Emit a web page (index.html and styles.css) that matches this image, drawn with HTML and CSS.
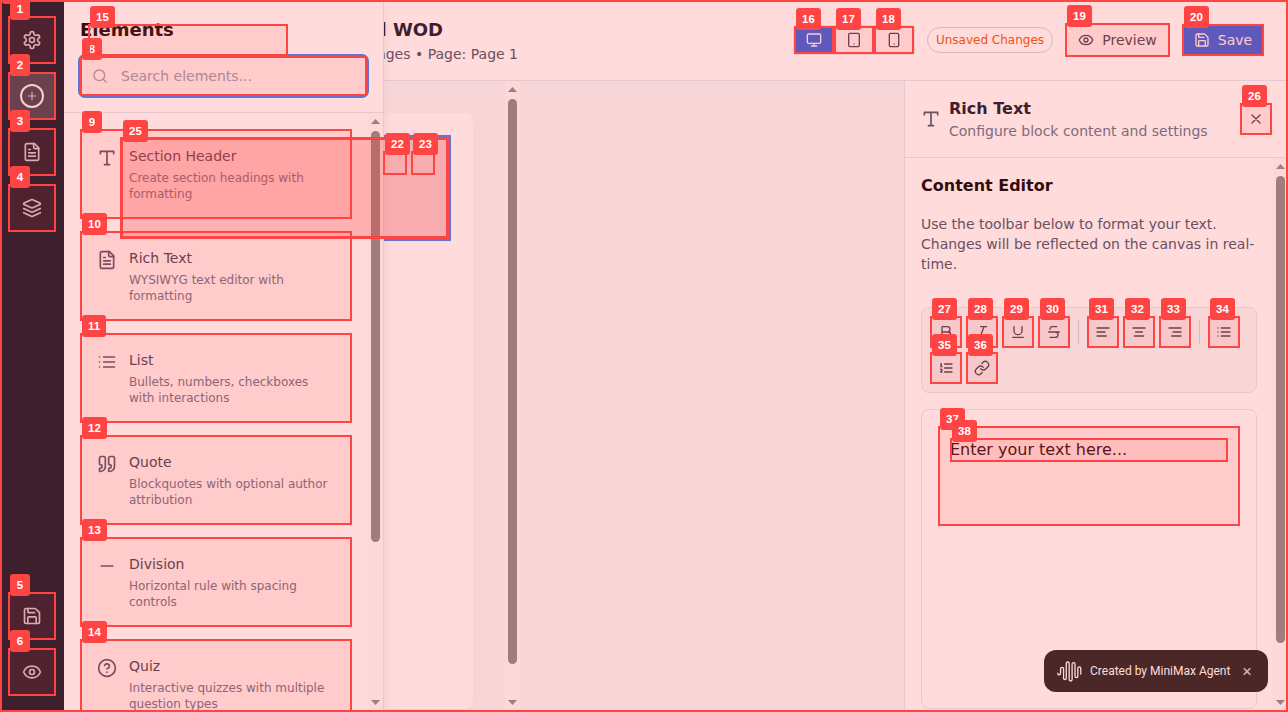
FILE: index.html
```html
<!DOCTYPE html>
<html lang="en">
<head>
<meta charset="utf-8">
<title>Page Builder</title>
<link rel="stylesheet" href="styles.css">
</head>
<body>
<svg class="defs" aria-hidden="true">
  <symbol id="settings" viewBox="0 0 24 24"><path d="M12.22 2h-.44a2 2 0 0 0-2 2v.18a2 2 0 0 1-1 1.73l-.43.25a2 2 0 0 1-2 0l-.15-.08a2 2 0 0 0-2.73.73l-.22.38a2 2 0 0 0 .73 2.73l.15.1a2 2 0 0 1 1 1.72v.51a2 2 0 0 1-1 1.74l-.15.09a2 2 0 0 0-.73 2.73l.22.38a2 2 0 0 0 2.73.73l.15-.08a2 2 0 0 1 2 0l.43.25a2 2 0 0 1 1 1.73V20a2 2 0 0 0 2 2h.44a2 2 0 0 0 2-2v-.18a2 2 0 0 1 1-1.73l.43-.25a2 2 0 0 1 2 0l.15.08a2 2 0 0 0 2.73-.73l.22-.39a2 2 0 0 0-.73-2.73l-.15-.08a2 2 0 0 1-1-1.74v-.5a2 2 0 0 1 1-1.74l.15-.09a2 2 0 0 0 .73-2.73l-.22-.38a2 2 0 0 0-2.73-.73l-.15.08a2 2 0 0 1-2 0l-.43-.25a2 2 0 0 1-1-1.73V4a2 2 0 0 0-2-2z"/><circle cx="12" cy="12" r="3"/></symbol>
  <symbol id="file" viewBox="0 0 24 24"><path d="M15 2H6a2 2 0 0 0-2 2v16a2 2 0 0 0 2 2h12a2 2 0 0 0 2-2V7Z"/><path d="M14 2v4a2 2 0 0 0 2 2h4M10 9H8M16 13H8M16 17H8"/></symbol>
  <symbol id="layers" viewBox="0 0 24 24"><path d="m12.83 2.18a2 2 0 0 0-1.66 0L2.6 6.08a1 1 0 0 0 0 1.83l8.58 3.91a2 2 0 0 0 1.66 0l8.58-3.9a1 1 0 0 0 0-1.83Z"/><path d="m22 17.65-9.17 4.16a2 2 0 0 1-1.66 0L2 17.65M22 12.65l-9.17 4.16a2 2 0 0 1-1.66 0L2 12.65"/></symbol>
  <symbol id="save" viewBox="0 0 24 24"><path d="M15.2 3a2 2 0 0 1 1.4.6l3.8 3.8a2 2 0 0 1 .6 1.4V19a2 2 0 0 1-2 2H5a2 2 0 0 1-2-2V5a2 2 0 0 1 2-2z"/><path d="M17 21v-7a1 1 0 0 0-1-1H8a1 1 0 0 0-1 1v7M7 3v4a1 1 0 0 0 1 1h7"/></symbol>
  <symbol id="eye" viewBox="0 0 24 24"><path d="M2.062 12.348a1 1 0 0 1 0-.696 10.75 10.75 0 0 1 19.876 0 1 1 0 0 1 0 .696 10.75 10.75 0 0 1-19.876 0"/><circle cx="12" cy="12" r="3"/></symbol>
  <symbol id="search" viewBox="0 0 24 24"><circle cx="11" cy="11" r="8"/><path d="m21 21-4.3-4.3"/></symbol>
  <symbol id="type" viewBox="0 0 24 24"><path d="M4 7V4h16v3M9 20h6M12 4v16"/></symbol>
  <symbol id="list" viewBox="0 0 24 24"><path d="M3 12h.01M3 18h.01M3 6h.01M8 12h13M8 18h13M8 6h13"/></symbol>
  <symbol id="quote" viewBox="0 0 24 24"><path d="M16 3a2 2 0 0 0-2 2v6a2 2 0 0 0 2 2 1 1 0 0 1 1 1v1a2 2 0 0 1-2 2 1 1 0 0 0-1 1v2a1 1 0 0 0 1 1 6 6 0 0 0 6-6V5a2 2 0 0 0-2-2zM5 3a2 2 0 0 0-2 2v6a2 2 0 0 0 2 2 1 1 0 0 1 1 1v1a2 2 0 0 1-2 2 1 1 0 0 0-1 1v2a1 1 0 0 0 1 1 6 6 0 0 0 6-6V5a2 2 0 0 0-2-2z"/></symbol>
  <symbol id="minus" viewBox="0 0 24 24"><path d="M5 12h14"/></symbol>
  <symbol id="help" viewBox="0 0 24 24"><circle cx="12" cy="12" r="10"/><path d="M9.09 9a3 3 0 0 1 5.83 1c0 2-3 3-3 3M12 17h.01"/></symbol>
  <symbol id="monitor" viewBox="0 0 24 24"><rect x="2" y="3" width="20" height="14" rx="2"/><path d="M8 21h8M12 17v4"/></symbol>
  <symbol id="tablet" viewBox="0 0 24 24"><rect x="4" y="2" width="16" height="20" rx="2"/><path d="M12 18h.01"/></symbol>
  <symbol id="phone" viewBox="0 0 24 24"><rect x="5" y="2" width="14" height="20" rx="2"/><path d="M12 18h.01"/></symbol>
  <symbol id="x" viewBox="0 0 24 24"><path d="M18 6 6 18M6 6l12 12"/></symbol>
  <symbol id="bold" viewBox="0 0 24 24"><path d="M6 12h9a4 4 0 0 1 0 8H7a1 1 0 0 1-1-1V5a1 1 0 0 1 1-1h7a4 4 0 0 1 0 8"/></symbol>
  <symbol id="italic" viewBox="0 0 24 24"><path d="M19 4h-9M14 20H5M15 4 9 20"/></symbol>
  <symbol id="underline" viewBox="0 0 24 24"><path d="M6 4v6a6 6 0 0 0 12 0V4M4 20h16"/></symbol>
  <symbol id="strike" viewBox="0 0 24 24"><path d="M16 4H9a3 3 0 0 0-2.83 4M14 12a4 4 0 0 1 0 8H6M4 12h16"/></symbol>
  <symbol id="left" viewBox="0 0 24 24"><path d="M15 12H3M17 18H3M21 6H3"/></symbol>
  <symbol id="center" viewBox="0 0 24 24"><path d="M17 12H7M19 18H5M21 6H3"/></symbol>
  <symbol id="right" viewBox="0 0 24 24"><path d="M21 12H9M21 18H7M21 6H3"/></symbol>
  <symbol id="ordered" viewBox="0 0 24 24"><path d="M10 12h11M10 18h11M10 6h11M4 10h2M4 6h1v4M6 18H4c0-1 2-2 2-3s-1-1.500-2-1"/></symbol>
  <symbol id="link" viewBox="0 0 24 24"><path d="M10 13a5 5 0 0 0 7.540.540l3-3a5 5 0 0 0-7.070-7.070l-1.720 1.710"/><path d="M14 11a5 5 0 0 0-7.540-.540l-3 3a5 5 0 0 0 7.070 7.070l1.710-1.710"/></symbol>
</svg>

<div class="app">
  <nav class="rail">
    <button class="rail-btn"><svg class="icon i20"><use href="#settings"/></svg></button>
    <button class="rail-btn active"><svg class="plus" viewBox="0 0 24 24"><circle cx="12" cy="12" r="11"/><path d="M12 8v8M8 12h8"/></svg></button>
    <button class="rail-btn"><svg class="icon i20"><use href="#file"/></svg></button>
    <button class="rail-btn"><svg class="icon i20"><use href="#layers"/></svg></button>
    <span class="spacer"></span>
    <button class="rail-btn"><svg class="icon i20"><use href="#save"/></svg></button>
    <button class="rail-btn"><svg class="icon i20"><use href="#eye"/></svg></button>
  </nav>

  <div class="main">
    <header class="topbar">
      <div class="heading">
        <h1>l WOD</h1>
        <p>ages • Page: Page 1</p>
      </div>
      <div class="actions">
        <div class="devices">
          <button class="on"><svg class="icon i16"><use href="#monitor"/></svg></button>
          <button><svg class="icon i16"><use href="#tablet"/></svg></button>
          <button><svg class="icon i16"><use href="#phone"/></svg></button>
        </div>
        <span class="badge">Unsaved Changes</span>
        <button class="btn preview"><svg class="icon i16"><use href="#eye"/></svg>Preview</button>
        <button class="btn save"><svg class="icon i16"><use href="#save"/></svg>Save</button>
      </div>
    </header>

    <div class="workspace">
      <div class="canvas">
        <div class="paper"><div class="block"></div></div>
      </div>
      <div class="scroll"><i class="up"></i><i class="thumb canvas-thumb"></i><i class="down"></i></div>
      <div class="blank"></div>

      <aside class="inspector">
        <div class="inspector-head">
          <svg class="icon i20"><use href="#type"/></svg>
          <div class="inspector-title"><h2>Rich Text</h2><p>Configure block content and settings</p></div>
          <button class="close"><svg class="icon i16"><use href="#x"/></svg></button>
        </div>
        <div class="inspector-main">
          <div class="inspector-body">
            <h3>Content Editor</h3>
            <p class="hint">Use the toolbar below to format your text. Changes will be reflected on the canvas in real-time.</p>
            <div class="toolbar">
              <button><svg class="icon i16"><use href="#bold"/></svg></button>
              <button><svg class="icon i16"><use href="#italic"/></svg></button>
              <button><svg class="icon i16"><use href="#underline"/></svg></button>
              <button><svg class="icon i16"><use href="#strike"/></svg></button>
              <span class="sep"></span>
              <button><svg class="icon i16"><use href="#left"/></svg></button>
              <button><svg class="icon i16"><use href="#center"/></svg></button>
              <button><svg class="icon i16"><use href="#right"/></svg></button>
              <span class="sep"></span>
              <button><svg class="icon i16"><use href="#list"/></svg></button>
              <button><svg class="icon i16"><use href="#ordered"/></svg></button>
              <button><svg class="icon i16"><use href="#link"/></svg></button>
            </div>
            <div class="editor"><p>Enter your text here...</p></div>
          </div>
          <div class="scroll"><i class="up"></i><i class="thumb inspector-thumb"></i><i class="down"></i></div>
        </div>
      </aside>
    </div>
  </div>

  <section class="drawer">
    <div class="drawer-head">
      <h2>Elements</h2>
      <div class="search"><svg class="icon i16"><use href="#search"/></svg><span>Search elements...</span></div>
    </div>
    <div class="drawer-main">
      <div class="cards">
        <div class="card"><svg class="icon i20"><use href="#type"/></svg><div><h4>Section Header</h4><p>Create section headings with formatting</p></div></div>
        <div class="card"><svg class="icon i20"><use href="#file"/></svg><div><h4>Rich Text</h4><p>WYSIWYG text editor with formatting</p></div></div>
        <div class="card"><svg class="icon i20"><use href="#list"/></svg><div><h4>List</h4><p>Bullets, numbers, checkboxes with interactions</p></div></div>
        <div class="card"><svg class="icon i20"><use href="#quote"/></svg><div><h4>Quote</h4><p>Blockquotes with optional author attribution</p></div></div>
        <div class="card"><svg class="icon i20"><use href="#minus"/></svg><div><h4>Division</h4><p>Horizontal rule with spacing controls</p></div></div>
        <div class="card"><svg class="icon i20"><use href="#help"/></svg><div><h4>Quiz</h4><p>Interactive quizzes with multiple question types</p></div></div>
      </div>
      <div class="scroll"><i class="up"></i><i class="thumb drawer-thumb"></i><i class="down"></i></div>
    </div>
  </section>

  <div class="toast">
    <svg class="wave" viewBox="0 0 24 20"><path d="M.8 11.500v.5a1.300 1.300 0 0 0 2.600 0V7.500a1.450 1.450 0 0 1 2.900 0v9a1.300 1.300 0 0 0 2.600 0V2.300a1.400 1.400 0 0 1 2.800 0v15.400a1.400 1.400 0 0 0 2.800 0V2.800a1.400 1.400 0 0 1 2.800 0v11.700a1.350 1.350 0 0 0 2.700 0V7a1.400 1.400 0 0 1 2.800 0v5.500"/></svg>
    <span>Created by MiniMax Agent</span><b>×</b>
  </div>

  <div class="marks">
    <div class="mark page"><b></b></div>
    <div class="mark page"></div>
    <div class="mark rail-mark m1"><b>1</b></div>
    <div class="mark rail-mark m2"><b>2</b></div>
    <div class="mark rail-mark m3"><b>3</b></div>
    <div class="mark rail-mark m4"><b>4</b></div>
    <div class="mark rail-mark m5"><b>5</b></div>
    <div class="mark rail-mark m6"><b>6</b></div>
    <div class="mark m8"><b>8</b></div>
    <div class="mark card-mark m9"><b>9</b></div>
    <div class="mark card-mark m10"><b>10</b></div>
    <div class="mark card-mark m11"><b>11</b></div>
    <div class="mark card-mark m12"><b>12</b></div>
    <div class="mark card-mark m13"><b>13</b></div>
    <div class="mark card-mark m14"><b>14</b></div>
    <div class="mark m15"><b>15</b></div>
    <div class="mark device-mark m16"><b>16</b></div>
    <div class="mark device-mark m17"><b>17</b></div>
    <div class="mark device-mark m18"><b>18</b></div>
    <div class="mark m19"><b>19</b></div>
    <div class="mark m20"><b>20</b></div>
    <div class="mark m21"></div>
    <div class="mark m24"></div>
    <div class="mark m25"><b>25</b></div>
    <div class="mark handle-mark m22"><b>22</b></div>
    <div class="mark handle-mark m23"><b>23</b></div>
    <div class="mark tool-mark m26"><b>26</b></div>
    <div class="mark tool-mark m27"><b>27</b></div>
    <div class="mark tool-mark m28"><b>28</b></div>
    <div class="mark tool-mark m29"><b>29</b></div>
    <div class="mark tool-mark m30"><b>30</b></div>
    <div class="mark tool-mark m31"><b>31</b></div>
    <div class="mark tool-mark m32"><b>32</b></div>
    <div class="mark tool-mark m33"><b>33</b></div>
    <div class="mark tool-mark m34"><b>34</b></div>
    <div class="mark tool-mark m35"><b>35</b></div>
    <div class="mark tool-mark m36"><b>36</b></div>
    <div class="mark m37"><b>37</b></div>
    <div class="mark m38"><b>38</b></div>
  </div>
</div>
</body>
</html>
```
FILE: styles.css
```css
* { box-sizing: border-box; margin: 0; padding: 0; }
body { width: 1288px; height: 712px; overflow: hidden; font-family: "DejaVu Sans", sans-serif; font-size: 14px; line-height: 20px; color: #0f172a; background: #fff; }
button { border: 0; background: none; font: inherit; color: inherit; display: flex; align-items: center; justify-content: center; }
.defs { position: absolute; width: 0; height: 0; }
.icon { fill: none; stroke: currentColor; stroke-width: 2; stroke-linecap: round; stroke-linejoin: round; flex: none; display: block; }
.i20 { width: 20px; height: 20px; }
.i16 { width: 16px; height: 16px; }

.app { position: relative; display: flex; width: 1288px; height: 712px; overflow: hidden; }

/* Icon rail */
.rail { width: 64px; height: 712px; padding: 16px 8px; display: flex; flex-direction: column; gap: 8px; background: #0f172a; color: #cbd5e1; }
.rail-btn { width: 48px; height: 48px; flex: none; }
.rail-btn.active { background: #334155; color: #fff; }
.plus { width: 24px; height: 24px; fill: none; stroke: currentColor; }
.plus circle { stroke-width: 2; }
.plus path { stroke-width: 1.2; stroke: #cbd5e1; }
.spacer { flex: 1; }

/* Top bar */
.main { width: 1224px; display: flex; flex-direction: column; }
.topbar { height: 81px; flex: none; padding: 0 24px; display: flex; justify-content: space-between; border-bottom: 1px solid #e2e8f0; background: #fff; }
.heading { width: 430px; padding-top: 16px; text-align: right; }
.heading h1 { font-size: 18px; line-height: 28px; padding-right: 75px; }
.heading p { color: #475569; }
.actions { height: 80px; display: flex; align-items: center; gap: 12px; }
.devices { display: flex; border: 1px solid #e2e8f0; border-radius: 4px; overflow: hidden; color: #334155; }
.devices button { width: 40px; height: 28px; }
.devices .on { background: #2563eb; color: #fff; }
.badge { width: 126px; height: 26px; line-height: 24px; text-align: center; font-size: 12px; color: #ea580c; border: 1px solid #cbd5e1; border-radius: 13px; white-space: nowrap; }
.btn { gap: 8px; white-space: nowrap; }
.preview { width: 105px; height: 34px; border: 1px solid #cbd5e1; color: #334155; }
.save { width: 82px; height: 32px; background: #2563eb; color: #fff; }

/* Canvas */
.workspace { flex: 1; min-height: 0; display: flex; background: #f8fafc; }
.canvas { width: 441px; padding: 32px; }
.paper { height: 596px; padding: 24px; border-radius: 8px; background: #fff; box-shadow: 0 1px 2px rgba(0,0,0,.05); }
.block { height: 102px; background: #f7faff; box-shadow: 0 0 0 2px #3b82f6; }
.blank { flex: 1; }

/* Scroll bars */
.scroll { width: 15px; flex: none; display: flex; flex-direction: column; align-items: center; background: #fcfcfc; padding: 6px 0 7px; }
.up, .down { width: 9px; height: 5px; flex: none; background: #8b8b8b; }
.up { clip-path: polygon(50% 0, 100% 100%, 0 100%); }
.down { clip-path: polygon(0 0, 100% 0, 50% 100%); margin-top: auto; }
.thumb { width: 9px; flex: none; margin-top: 7px; border-radius: 4.5px; background: #8b8b8b; }
.canvas-thumb { height: 565px; }
.inspector-thumb { height: 467px; }
.drawer-thumb { height: 411px; }

/* Inspector */
.inspector { width: 384px; flex: none; display: flex; flex-direction: column; border-left: 1px solid #e2e8f0; background: #fff; }
.inspector-head { height: 77px; flex: none; padding: 0 16px; display: flex; align-items: center; gap: 8px; border-bottom: 1px solid #e2e8f0; color: #475569; }
.inspector-title { flex: 1; }
.inspector-head h2 { font-size: 16px; line-height: 24px; color: #0f172a; }
.inspector-head p { color: #64748b; white-space: nowrap; }
.close { width: 32px; height: 32px; color: #334155; }
.inspector-main { flex: 1; min-height: 0; display: flex; }
.inspector-body { width: 368px; padding: 16px; overflow: hidden; }
.inspector-body h3 { font-size: 16px; line-height: 24px; color: #000; }
.hint { margin: 16px 0 33px; color: #475569; }
.toolbar { display: flex; flex-wrap: wrap; gap: 4px; align-items: center; padding: 8px; border: 1px solid #e2e8f0; border-radius: 8px; background: #f8fafc; color: #334155; }
.toolbar button { width: 32px; height: 32px; }
.sep { width: 1px; height: 24px; margin: 0 4px; background: #cbd5e1; }
.editor { height: 300px; margin-top: 16px; padding: 28px; border: 1px solid #e2e8f0; border-radius: 8px; font-size: 16px; line-height: 24px; color: #000; }

/* Elements drawer, lying over the canvas */
.drawer { position: absolute; left: 64px; top: 0; width: 320px; height: 712px; display: flex; flex-direction: column; background: #fff; border-right: 1px solid #e2e8f0; box-shadow: 0 10px 15px -3px rgba(0,0,0,.1); }
.drawer-head { height: 113px; flex: none; padding: 16px; border-bottom: 1px solid #e2e8f0; }
.drawer-head h2 { font-size: 18px; line-height: 28px; margin-bottom: 12px; color: #000; }
.search { height: 40px; display: flex; align-items: center; gap: 13px; padding-left: 12px; border-radius: 5px; box-shadow: 0 0 0 2px #3b82f6; color: #94a3b8; }
.drawer-main { flex: 1; min-height: 0; display: flex; }
.cards { width: 304px; padding: 16px; display: flex; flex-direction: column; gap: 12px; overflow: hidden; }
.card { height: 90px; flex: none; display: flex; gap: 12px; padding: 16px; border: 1px solid #e2e8f0; color: #475569; }
.card .icon { margin-top: 2px; }
.card h4 { font-weight: 400; color: #334155; margin-bottom: 4px; }
.card p { font-size: 12px; line-height: 16px; color: #64748b; }

/* Toast */
.toast { position: absolute; left: 1044px; top: 650px; width: 224px; height: 42px; display: flex; align-items: center; border-radius: 12px; background: #212121; color: #fff; font: 12px/16px Roboto, sans-serif; padding-left: 13px; white-space: nowrap; }
.wave { width: 25px; height: 21px; margin-right: 8px; fill: none; stroke: #fff; stroke-width: 1.25; stroke-linecap: round; }
.toast b { margin-left: 12px; font-weight: 400; font-size: 17px; color: #ccc; }

/* Numbered highlight boxes */
.marks { position: absolute; inset: 0; }
.mark { position: absolute; border: 2px solid #f44; background: rgba(255,68,68,.1); }
.mark b { position: absolute; left: 0; top: -20px; min-width: 20px; height: 22px; padding: 0 6px; border-radius: 3px; background: #f44; color: #fff; font: bold 11.5px/22px "Liberation Sans", sans-serif; text-align: center; }
.page { inset: 0; }
.rail-mark { left: 8px; width: 48px; height: 48px; }
.m1 { top: 16px; } .m2 { top: 72px; } .m3 { top: 128px; } .m4 { top: 184px; } .m5 { top: 592px; } .m6 { top: 648px; }
.m8 { left: 80px; top: 56px; width: 287px; height: 40px; border-radius: 2px; }
.card-mark { left: 80px; width: 272px; height: 90px; }
.m9 { top: 129px; } .m10 { top: 231px; } .m11 { top: 333px; } .m12 { top: 435px; } .m13 { top: 537px; } .m14 { top: 639px; }
.m15 { left: 88px; top: 24px; width: 200px; height: 32px; }
.device-mark { top: 26px; width: 40px; height: 28px; }
.m16 { left: 794px; } .m17 { left: 834px; } .m18 { left: 874px; }
.m19 { left: 1065px; top: 23px; width: 105px; height: 34px; }
.m20 { left: 1182px; top: 24px; width: 82px; height: 32px; }
.m21 { left: 120px; top: 137px; width: 329px; height: 102px; }
.m24, .m25 { left: 121px; top: 138px; width: 327px; height: 100px; }
.handle-mark { top: 151px; width: 24px; height: 24px; background: none; }
.m22 { left: 383px; } .m23 { left: 411px; }
.tool-mark { top: 316px; width: 32px; height: 32px; }
.m26 { left: 1240px; top: 103px; }
.m27 { left: 930px; } .m28 { left: 966px; } .m29 { left: 1002px; } .m30 { left: 1038px; }
.m31 { left: 1087px; } .m32 { left: 1123px; } .m33 { left: 1159px; } .m34 { left: 1208px; }
.m35 { left: 930px; top: 352px; } .m36 { left: 966px; top: 352px; }
.m37 { left: 938px; top: 426px; width: 302px; height: 100px; }
.m38 { left: 950px; top: 438px; width: 278px; height: 24px; }
```
